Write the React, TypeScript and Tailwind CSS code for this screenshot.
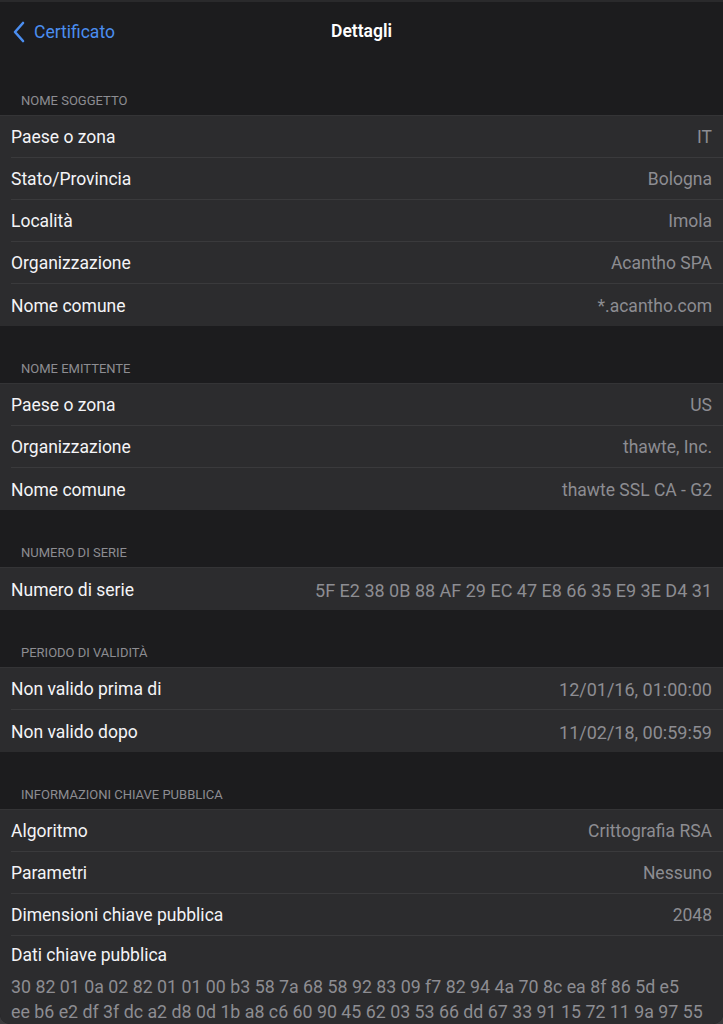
const sections: { title: string; rows: [string, string][] }[] = [
  {
    title: "NOME SOGGETTO",
    rows: [
      ["Paese o zona", "IT"],
      ["Stato/Provincia", "Bologna"],
      ["Località", "Imola"],
      ["Organizzazione", "Acantho SPA"],
      ["Nome comune", "*.acantho.com"],
    ],
  },
  {
    title: "NOME EMITTENTE",
    rows: [
      ["Paese o zona", "US"],
      ["Organizzazione", "thawte, Inc."],
      ["Nome comune", "thawte SSL CA - G2"],
    ],
  },
  {
    title: "NUMERO DI SERIE",
    rows: [["Numero di serie", "5F E2 38 0B 88 AF 29 EC 47 E8 66 35 E9 3E D4 31"]],
  },
  {
    title: "PERIODO DI VALIDITÀ",
    rows: [
      ["Non valido prima di", "12/01/16, 01:00:00"],
      ["Non valido dopo", "11/02/18, 00:59:59"],
    ],
  },
]

const keyRows: [string, string][] = [
  ["Algoritmo", "Crittografia RSA"],
  ["Parametri", "Nessuno"],
  ["Dimensioni chiave pubblica", "2048"],
]

function SectionHeader({ title }: { title: string }) {
  return (
    <div className="h-[58px] flex items-end pb-[5px] pl-[21px] text-[13px] text-[#8d8d92] border-b border-[#343436]">
      {title}
    </div>
  )
}

function Row({ label, value, last }: { label: string; value: string; last?: boolean }) {
  // numeric values render a bit wider in the original font
  const numeric = /^[0-9A-F ,/:]+$/.test(value) && value.length > 6
  return (
    <div className="pl-[11px] bg-[#2c2c2e]">
      <div className={"h-[42px] flex items-center justify-between pr-[11px] pt-[2px] " + (last ? "" : "border-b border-[#3a3a3c]")}>
        <span className="text-[17.5px] text-[#f4f4f7]">{label}</span>
        <span className={(numeric ? "text-[18px]" : "text-[17.5px]") + " text-[#8d8d92]"}>{value}</span>
      </div>
    </div>
  )
}

export default function App() {
  return (
    <div className="w-[723px] h-[1024px] bg-[#3a3a3c] overflow-hidden" style={{ fontFamily: "Roboto, 'Liberation Sans', sans-serif" }}>
      <div className="h-full bg-[#1c1c1e] rounded-b-[10px] overflow-hidden border-t-2 border-[#2a2a2c]">
        <div className="h-[56px] relative flex items-center">
          <div className="flex items-center pl-[12px] text-[#4b8ef0] text-[17.5px] mt-[4px]">
            <svg width="14" height="22" viewBox="0 0 14 22" fill="none">
              <path d="M11 2 L3 11 L11 20" stroke="#4b8ef0" strokeWidth="2.6" strokeLinecap="round" strokeLinejoin="round" />
            </svg>
            <span className="ml-[8px]">Certificato</span>
          </div>
          <div className="absolute inset-x-0 top-0 h-full flex items-center justify-center mt-[1px] text-[17.5px] font-semibold text-white">
            Dettagli
          </div>
        </div>
        {sections.map((s) => (
          <div key={s.title}>
            <SectionHeader title={s.title} />
            {s.rows.map(([l, v], i) => (
              <Row key={l} label={l} value={v} last={i === s.rows.length - 1} />
            ))}
          </div>
        ))}
        <SectionHeader title="INFORMAZIONI CHIAVE PUBBLICA" />
        <div className="bg-[#2c2c2e]">
          {keyRows.map(([l, v]) => (
            <Row key={l} label={l} value={v} />
          ))}
          <div className="pl-[11px] pr-[11px] pt-[6px] pb-4">
            <div className="text-[17.5px] text-[#f4f4f7]">Dati chiave pubblica</div>
            <div className="text-[17.8px] text-[#8d8d92] leading-[25px] mt-[6px] whitespace-nowrap">
              30 82 01 0a 02 82 01 01 00 b3 58 7a 68 58 92 83 09 f7 82 94 4a 70 8c ea 8f 86 5d e5
              <br />
              ee b6 e2 df 3f dc a2 d8 0d 1b a8 c6 60 90 45 62 03 53 66 dd 67 33 91 15 72 11 9a 97 55
            </div>
          </div>
        </div>
      </div>
    </div>
  )
}
